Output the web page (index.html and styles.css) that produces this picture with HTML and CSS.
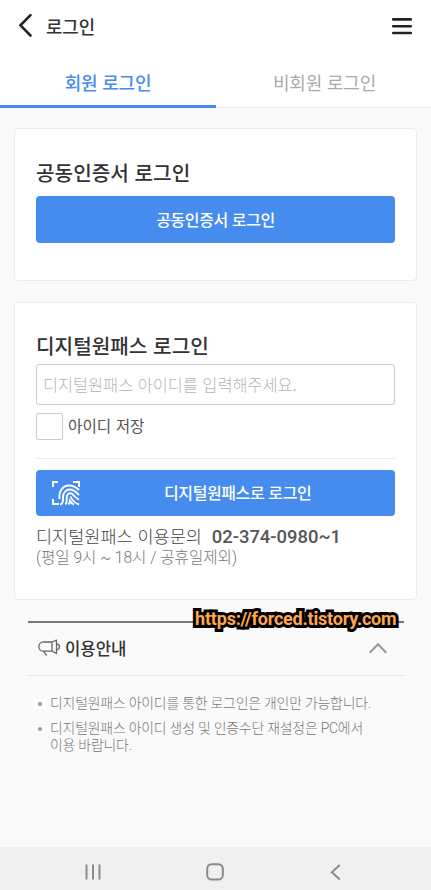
FILE: index.html
```html
<!DOCTYPE html>
<html lang="ko">
<head>
    <meta charset="UTF-8">
    <meta name="viewport" content="width=device-width, initial-scale=1.0">
    <title>로그인</title>
    <link rel="stylesheet" href="styles.css">
</head>
<body>
    <header class="header">
        <button type="button" class="icon-btn" aria-label="뒤로">
            <svg width="16" height="26" viewBox="0 0 16 26"><path d="M12.5 2.2 2.5 12.3l10 10.2"/></svg>
        </button>
        <h1>로그인</h1>
        <button type="button" class="icon-btn menu" aria-label="메뉴">
            <svg width="20" height="18" viewBox="0 0 20 18"><path d="M1.2 2.4h17.6M1.2 9.2h17.6M1.2 16h17.6"/></svg>
        </button>
    </header>

    <nav class="tabs">
        <a class="tab active">회원 로그인</a>
        <a class="tab">비회원 로그인</a>
    </nav>

    <main>
        <section class="card cert">
            <h2>공동인증서 로그인</h2>
            <button type="button" class="btn">공동인증서 로그인</button>
        </section>

        <section class="card onepass">
            <h2>디지털원패스 로그인</h2>
            <input type="text" class="user-id" placeholder="디지털원패스 아이디를 입력해주세요.">
            <label class="save">
                <input type="checkbox"><span>아이디 저장</span>
            </label>
            <hr>
            <button type="button" class="btn finger">
                <svg width="30" height="28" viewBox="0 0 30 28">
                    <path d="M2 8V3h5M22 3h6v5M2 20v5h6"/>
                    <path class="print" d="M8.500 20C7.500 12 12 6.500 18 6.500c4 0 7 1.500 10 4.500M9 25.500c3-.5 3-3 3-7 0-5 3-8 7-8 4 0 6 2.500 9 5.500M14.500 25.500c2-2.500 1-5 1.300-7.500.5-4 4-5 6.500-2 1.800 2.200 3.200 3.500 5.700 4.500M19.500 17.500c1.500 3.500 4.500 6.500 8.500 8M17.500 25.500c1.200-1 1.500-2 1.500-3.500 1 1.500 2 2.800 4 3.500"/>
                </svg>
                <span>디지털원패스로 로그인</span>
            </button>
            <p class="contact">디지털원패스 이용문의 <strong>02-374-0980~1</strong></p>
            <p class="hours">(평일 9시 ~ 18시 / 공휴일제외)</p>
        </section>

        <section class="guide">
            <span class="watermark">https://forced.tistory.com</span>
            <div class="guide-title">
                <svg class="horn" width="23" height="18" viewBox="0 0 23 18"><path d="M14 3H6a4.600 4.600 0 0 0-1 9.200h9M14 3l4.500-1.900v13.400L14 12.200zM18.500 4.800c4 .4 4 5.600 0 6M5.200 12.200l3.600 4.300"/></svg>
                <h3>이용안내</h3>
                <svg class="arrow" width="20" height="13" viewBox="0 0 20 13"><path d="m1.800 10.800 8.200-8.500 8.200 8.500"/></svg>
            </div>
            <ul>
                <li>디지털원패스 아이디를 통한 로그인은 개인만 가능합니다.</li>
                <li>디지털원패스 아이디 생성 및 인증수단 재설정은 PC에서<br>이용 바랍니다.</li>
            </ul>
        </section>
    </main>

    <footer class="navbar">
        <svg width="18" height="18" viewBox="0 0 18 18"><path d="M2.500 1.500v15M9 1.500v15M15.500 1.500v15"/></svg>
        <svg width="18" height="18" viewBox="0 0 18 18"><rect x="1.200" y="1.200" width="15.600" height="15.300" rx="4.500"/></svg>
        <svg width="18" height="18" viewBox="0 0 18 18"><path d="M12.700 2 4.900 9.200l7.800 7.300"/></svg>
    </footer>
</body>
</html>
```

FILE: styles.css
```css
* {
    box-sizing: border-box;
}

body {
    display: flex;
    flex-direction: column;
    height: 890px;
    margin: 0;
    overflow: hidden;
    background: #fafafa;
    color: #333;
    font-family: "Noto Sans CJK KR", sans-serif;
}

h1, h2, h3, p, ul {
    margin: 0;
    padding: 0;
}

button {
    border: none;
    padding: 0;
    font-family: inherit;
    cursor: pointer;
}

svg {
    display: block;
    fill: none;
    stroke: currentColor;
    stroke-width: 2;
}

.header {
    display: flex;
    align-items: center;
    height: 56px;
    padding: 0 18px;
    background: #fff;
}

.header h1 {
    margin: -4px 0 0 12px;
    font-size: 17.8px;
    font-weight: 500;
}

.icon-btn {
    margin-top: -5px;
    background: none;
    color: #222;
}

.icon-btn svg {
    stroke-width: 2.6;
    stroke-linecap: round;
}

.icon-btn.menu {
    margin: -4px 1px 0 auto;
}

.tabs {
    display: flex;
    height: 52px;
    background: #fff;
    border-bottom: 1px solid #ebebeb;
}

.tab {
    flex: 1;
    height: 52px;
    padding-left: 2px;
    line-height: 52px;
    text-align: center;
    font-size: 18px;
    letter-spacing: -0.2px;
    color: #aaa;
}

.tab.active {
    flex: 0 0 216px;
    padding-left: 0;
    color: #468cee;
    font-weight: 500;
    border-bottom: 3px solid #468cee;
}

.card {
    margin: 20px 14px 0;
    padding: 0 21px;
    background: #fff;
    border: 1px solid #ececec;
    border-radius: 4px;
}

.card h2 {
    font-size: 20.2px;
    font-weight: 500;
    line-height: 30px;
}

.cert {
    height: 153px;
    padding-top: 29px;
}

.cert .btn {
    margin-top: 8px;
    padding-bottom: 2px;
}

.onepass {
    height: 298px;
    margin-top: 21px;
    padding-top: 28px;
}

.btn {
    display: block;
    width: 100%;
    height: 47px;
    border-radius: 4px;
    background: #468cee;
    color: #fff;
    font-size: 16px;
    font-weight: 500;
    letter-spacing: -0.4px;
}

.user-id {
    display: block;
    width: 100%;
    height: 41px;
    margin-top: 3px;
    padding: 0 6px 1px;
    border: 1px solid #ccc;
    border-radius: 3px;
    font-family: inherit;
    font-size: 16.4px;
    letter-spacing: -0.05px;
}

.user-id::placeholder {
    color: #b5b5b5;
    font-weight: 300;
}

.save {
    display: flex;
    align-items: center;
    height: 27px;
    margin-top: 8px;
    font-size: 15.7px;
    color: #555;
}

.save span {
    margin-top: -3px;
}

.save input {
    appearance: none;
    width: 27px;
    height: 27px;
    margin: 0 5px 0 0;
    border: 1px solid #ccc;
    border-radius: 2px;
}

hr {
    margin: 18px 0 11px;
    border: none;
    border-top: 1px solid #ebebeb;
}

.finger {
    display: flex;
    align-items: center;
    height: 46px;
    padding-left: 15px;
}

.finger svg {
    margin-right: 83px;
}

.finger span {
    margin-top: -3px;
}

.finger .print {
    stroke-width: 1.9;
}

.contact {
    margin-top: 7px;
    font-size: 17.5px;
    font-weight: 300;
    line-height: 26px;
    color: #444;
}

.contact strong {
    margin-left: 5px;
    font-family: Roboto, sans-serif;
    font-size: 18.4px;
    font-weight: 500;
    color: #555;
}

.hours {
    font-family: Roboto, "Noto Sans CJK KR", sans-serif;
    font-size: 15.6px;
    font-weight: 300;
    line-height: 17px;
    color: #777;
}

.guide {
    position: relative;
    margin: 21px 27px 0 28px;
    border-top: 2px solid #777;
}

.watermark {
    position: absolute;
    top: -15px;
    left: 167px;
    color: #ffa750;
    font-family: Roboto, sans-serif;
    font-size: 18px;
    font-weight: 700;
    letter-spacing: -0.19px;
    line-height: 22px;
    -webkit-text-stroke: 6px #000;
    paint-order: stroke fill;
    stroke-linejoin: round;
    white-space: nowrap;
}

.guide-title {
    display: flex;
    align-items: center;
    height: 53px;
    padding: 0 16px 0 10px;
    border-bottom: 1px solid #e5e5e5;
}

.horn {
    margin: -3px 4px 0 0;
    color: #666;
    stroke-width: 1.3;
    stroke-linejoin: round;
}

.guide-title h3 {
    margin-top: -2px;
    font-size: 16.7px;
    font-weight: 500;
}

.arrow {
    margin: -1px 0 0 auto;
    color: #999;
}

.guide ul {
    padding: 19px 0 0 22px;
    list-style: none;
}

.guide li {
    position: relative;
    margin-bottom: 8px;
    font-family: Roboto, "Noto Sans CJK KR", sans-serif;
    font-size: 13.9px;
    font-weight: 300;
    letter-spacing: -0.2px;
    line-height: 17px;
    color: #777;
    white-space: nowrap;
}

.guide li::before {
    content: "";
    position: absolute;
    left: -12px;
    top: 7px;
    width: 4px;
    height: 4px;
    border-radius: 50%;
    background: #999;
}

.navbar {
    display: flex;
    justify-content: space-between;
    height: 43px;
    margin-top: auto;
    padding: 16px 86px 0 84px;
    background: #f0f0f0;
    color: #8b8b8b;
}
```
